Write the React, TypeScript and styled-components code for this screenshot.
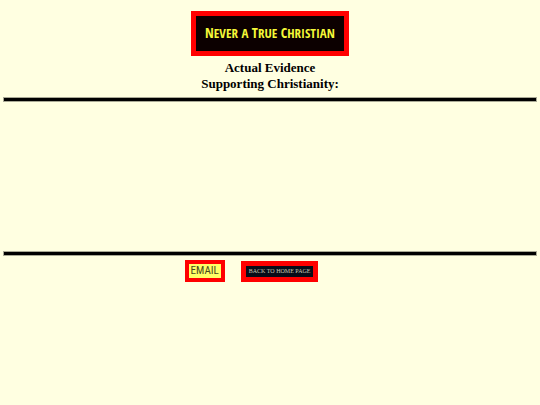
import React from "react";
import styled, { createGlobalStyle } from "styled-components";

const GlobalStyle = createGlobalStyle`
  * { box-sizing: border-box; }
  body {
    margin: 0;
    background: #ffffe1;
    color: #000;
    font-family: "Liberation Serif", "Times New Roman", serif;
  }
`;

const Page = styled.main`
  padding: 11px 3px 0;
`;

const Header = styled.header`
  display: flex;
  flex-direction: column;
  align-items: center;
  gap: 4px;
`;

const Banner = styled.div`
  padding: 8px 9px 9px;
  border: 5px solid #ff0000;
  background: #0c0000;
  color: #f4f838;
  font: bold 14px/18px "Open Sans Condensed", "Roboto Condensed", sans-serif;
  white-space: nowrap;
`;

const SmallCaps = styled.span`
  font-size: 13px;
  line-height: 1;
  text-transform: uppercase;
`;

const Title = styled.h1`
  margin: 0;
  font-size: 13px;
  line-height: 16px;
  font-weight: bold;
  text-align: center;
`;

const Rule = styled.hr`
  height: 5px;
  margin: 5px 0 0;
  border: 1px solid #a9a995;
  background: #000;
`;

const Evidence = styled.section`
  min-height: 144px;
`;

const Footer = styled.footer`
  display: flex;
  justify-content: center;
  align-items: center;
  gap: 16px;
  padding: 4px 37px 0 0;
`;

const LinkBadge = styled.a`
  display: block;
  border: 4px solid #ff0000;
  text-decoration: none;
  white-space: nowrap;
`;

const EmailLink = styled(LinkBadge)`
  padding: 0 2px;
  background: #ffff66;
  color: #48481c;
  font: 11px/14px "Roboto Condensed", sans-serif;
`;

const HomeLink = styled(LinkBadge)`
  padding: 0 3px;
  border-width: 5px;
  background: #080c18;
  color: #c8c8b4;
  font: 6px/11px "Liberation Serif", serif;
`;

export default function App() {
  return (
    <>
      <GlobalStyle />
      <Page>
        <Header>
          <Banner>
            N<SmallCaps>ever</SmallCaps> <SmallCaps>a</SmallCaps>{" "}
            T<SmallCaps>rue</SmallCaps> C<SmallCaps>hristian</SmallCaps>
          </Banner>
          <Title>
            Actual Evidence
            <br />
            Supporting Christianity:
          </Title>
        </Header>
        <Rule />
        <Evidence aria-label="Evidence" />
        <Rule />
        <Footer>
          <EmailLink href="mailto:">EMAIL</EmailLink>
          <HomeLink href="/">BACK TO HOME PAGE</HomeLink>
        </Footer>
      </Page>
    </>
  );
}
